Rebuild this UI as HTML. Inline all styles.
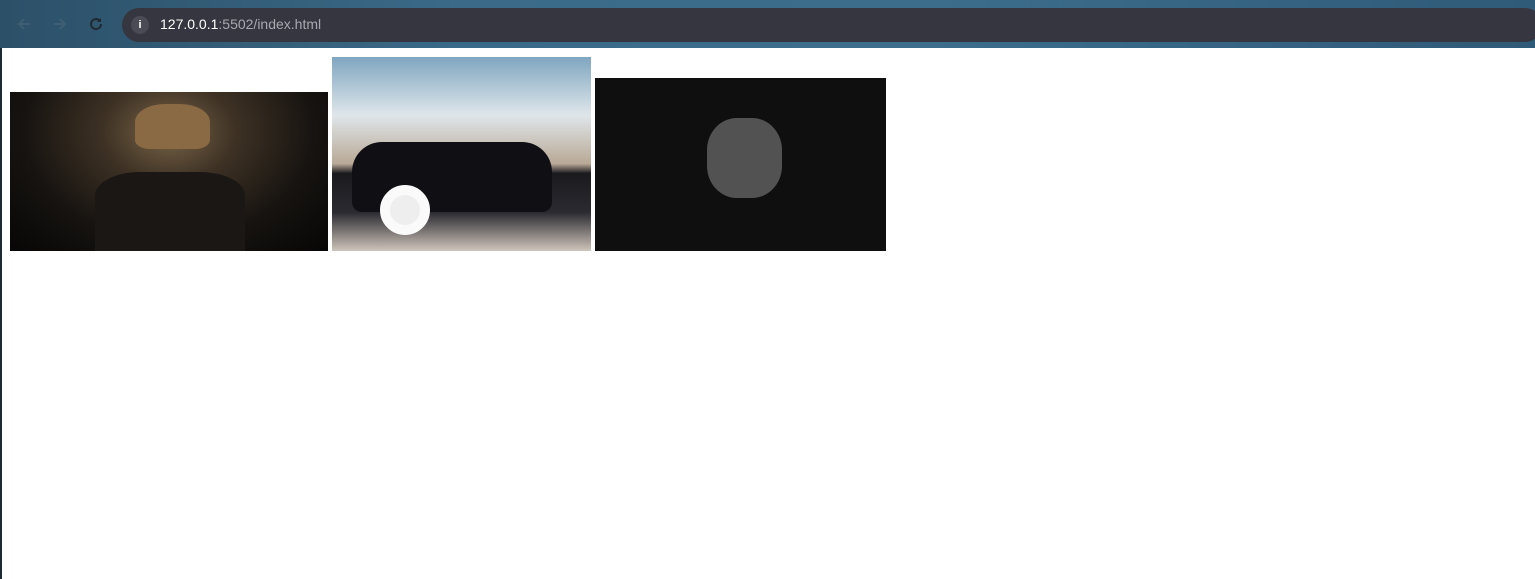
<!DOCTYPE html>
<html><head><meta charset="utf-8"><style>
*{margin:0;padding:0;box-sizing:border-box}
body{width:1535px;height:579px;background:#fff;position:relative;overflow:hidden;font-family:"Liberation Sans",sans-serif}
.bar{position:absolute;left:0;top:0;width:1535px;height:48px;background:linear-gradient(90deg,#2c5068 0%,#3a6a88 30%,#3c6e8c 60%,#2f5a78 100%)}
.edge{position:absolute;left:0;top:48px;width:2px;height:531px;background:#1e2a36}
.url{position:absolute;left:122px;top:8px;width:1420px;height:34px;border-radius:17px;background:#35363f}
.info{position:absolute;left:131px;top:16px;width:18px;height:18px;border-radius:50%;background:#4a4b55;color:#fff;font-size:11px;text-align:center;line-height:18px;font-weight:bold}
.txt{position:absolute;left:160px;top:16px;font-size:14px;color:#fff}
.txt span{color:#a8a9b0}
svg.nav{position:absolute;top:16px}
.img{position:absolute}
</style></head><body>
<div class="bar"></div>
<svg class="nav" style="left:16px" width="16" height="16" viewBox="0 0 16 16"><path d="M14 8H3M8 3L3 8l5 5" stroke="#3f5d73" stroke-width="2" fill="none"/></svg>
<svg class="nav" style="left:52px" width="16" height="16" viewBox="0 0 16 16"><path d="M2 8h11M8 3l5 5-5 5" stroke="#3f5d73" stroke-width="2" fill="none"/></svg>
<svg class="nav" style="left:88px" width="16" height="16" viewBox="0 0 16 16"><path d="M13 8a5 5 0 1 1-1.5-3.5" stroke="#1f2a33" stroke-width="2" fill="none"/><path d="M13 2v4H9z" fill="#1f2a33"/></svg>
<div class="url"></div>
<div class="info">i</div>
<div class="txt">127.0.0.1<span>:5502/index.html</span></div>
<div class="edge"></div>
<div class="img" style="left:10px;top:92px;width:318px;height:159px;background:radial-gradient(ellipse at 50% 25%,#7a6548 0%,#3d3124 30%,#161310 65%,#070606 100%)">
<div style="position:absolute;left:125px;top:12px;width:75px;height:45px;border-radius:40% 40% 20% 20%;background:#8a6a45"></div>
<div style="position:absolute;left:85px;top:80px;width:150px;height:79px;background:#1a1714;border-radius:30% 30% 0 0"></div>
</div>
<div class="img" style="left:332px;top:57px;width:259px;height:194px;background:linear-gradient(180deg,#7fa6c0 0%,#dfe6ea 30%,#b9a996 55%,#1a1a1e 60%,#2a2a30 80%,#cfc5bb 100%)">
<div style="position:absolute;left:20px;top:85px;width:200px;height:70px;background:#101014;border-radius:30px 30px 10px 10px"></div>
<div style="position:absolute;left:48px;top:128px;width:50px;height:50px;border-radius:50%;background:#eee;border:10px solid #fafafa"></div>
</div>
<div class="img" style="left:595px;top:78px;width:291px;height:173px;background:#0f0f0f">
<div style="position:absolute;left:112px;top:40px;width:75px;height:80px;background:#8a8a8a;border-radius:40%;opacity:.55"></div>
</div>
</body></html>
